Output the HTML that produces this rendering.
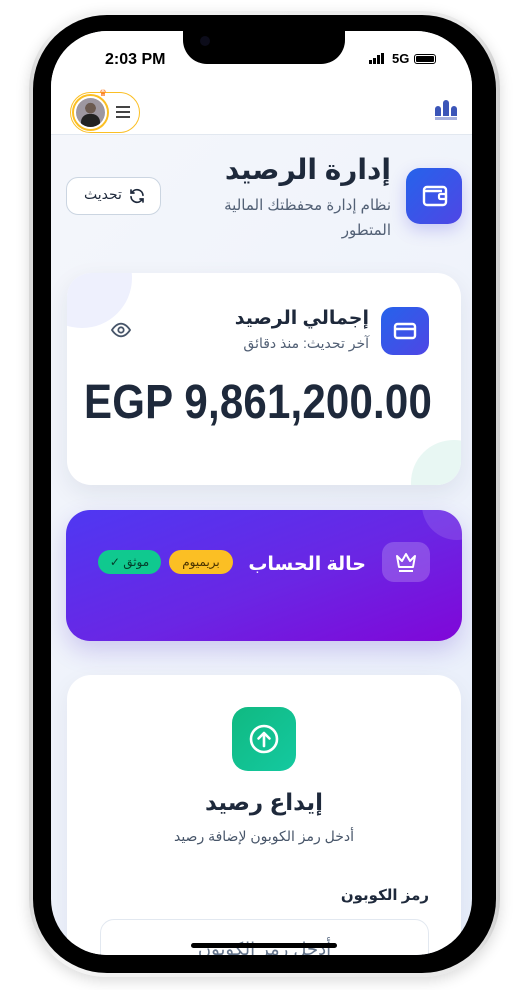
<!DOCTYPE html>
<html><head><meta charset="utf-8">
<style>
*{margin:0;padding:0;box-sizing:border-box}
body{width:522px;height:990px;background:#fff;position:relative;overflow:hidden;font-family:"Liberation Sans","Noto Sans CJK SC",sans-serif}
.abs{position:absolute}
.frame{left:29px;top:11px;width:471px;height:966px;border-radius:78px;background:linear-gradient(90deg,#d7d7d7,#f4f4f4 6%,#e8e8e8 94%,#cfcfcf);box-shadow:0 4px 14px rgba(0,0,0,.15)}
.bezel{left:33px;top:15px;width:463px;height:958px;border-radius:74px;background:#000}
.screen{left:51px;top:31px;width:421px;height:924px;border-radius:56px;overflow:hidden;background:linear-gradient(135deg,#f5f7fb,#eef2fb 60%,#e7eefb)}
.ar{direction:rtl;font-family:"Liberation Sans","DejaVu Sans",sans-serif}
</style></head><body>
<div class="abs frame"></div>
<div class="abs bezel"></div>
<div class="abs screen">
  <div class="abs" style="left:0;top:0;width:421px;height:104px;background:#fff;border-bottom:1px solid #e2e8f0"></div>
  <div class="abs" style="left:132px;top:-2px;width:162px;height:35px;background:#000;border-radius:0 0 24px 24px"></div>
  <div class="abs" style="left:149px;top:5px;width:10px;height:10px;border-radius:50%;background:#0c0c1a"></div>
  <div class="abs" style="left:54px;top:20px;font-weight:bold;font-size:16px;color:#000">2:03 PM</div>
  <div class="abs" style="left:318px;top:22px;width:18px;height:12px">
    <div class="abs" style="left:0;top:7px;width:3px;height:4px;background:#000"></div>
    <div class="abs" style="left:4px;top:5px;width:3px;height:6px;background:#000"></div>
    <div class="abs" style="left:8px;top:2px;width:3px;height:9px;background:#000"></div>
    <div class="abs" style="left:12px;top:0;width:3px;height:11px;background:#000"></div>
  </div>
  <div class="abs" style="left:341px;top:20px;font-weight:bold;font-size:13px;color:#000">5G</div>
  <div class="abs" style="left:363px;top:23px;width:22px;height:10px;border:1.5px solid #000;border-radius:3px;padding:1px"><div style="width:100%;height:100%;background:#000;border-radius:1px"></div></div>
  <!-- header pill -->
  <div class="abs" style="left:19px;top:61px;width:70px;height:41px;border:1.5px solid #fbbf24;border-radius:21px;background:#fff"></div>
  <div class="abs" style="left:21px;top:63px;width:37px;height:37px;border:2px solid #fbbf24;border-radius:50%;padding:2px"><div style="width:100%;height:100%;border-radius:50%;background:radial-gradient(circle at 50% 35%,#6b5a50 0 22%,#9d97a0 23%);overflow:hidden;position:relative"><div style="position:absolute;left:5px;top:16px;width:19px;height:14px;background:#222;border-radius:8px 8px 0 0"></div></div></div>
  <div class="abs" style="left:48px;top:57px;font-size:9px;color:#f97316">♛</div>
  <div class="abs" style="left:65px;top:75px;width:14px;height:2px;background:#444;box-shadow:0 5px 0 #444,0 10px 0 #444"></div>
  <!-- logo -->
  <div class="abs" style="left:384px;top:69px;width:22px;height:16px">
    <div class="abs" style="left:0;top:6px;width:6px;height:10px;background:#3b55b8;border-radius:3px 3px 0 0"></div>
    <div class="abs" style="left:8px;top:0;width:6px;height:16px;background:#3b55b8;border-radius:3px 3px 0 0"></div>
    <div class="abs" style="left:16px;top:6px;width:6px;height:10px;background:#3b55b8;border-radius:3px 3px 0 0"></div>
  </div>
  <div class="abs" style="left:384px;top:86px;width:22px;height:3px;background:#6b7cc8;opacity:.6"></div>

  <!-- page title -->
  <div class="abs" style="left:355px;top:137px;width:56px;height:56px;border-radius:14px;background:linear-gradient(135deg,#2563eb,#4f46e5);box-shadow:0 6px 16px rgba(79,70,229,.25)">
    <svg width="56" height="56" viewBox="0 0 56 56"><rect x="18" y="19" width="22" height="18" rx="3" fill="none" stroke="#fff" stroke-width="2.4"/><path d="M18 23h18" stroke="#fff" stroke-width="2.4" fill="none"/><rect x="33" y="26" width="7" height="5" rx="1.5" fill="none" stroke="#fff" stroke-width="2.2"/></svg>
  </div>
  <div class="abs ar" style="right:81px;top:122px;font-size:28px;font-weight:bold;color:#1e293b">إدارة الرصيد</div>
  <div class="abs ar" style="right:81px;top:162px;width:200px;font-size:15px;line-height:25px;color:#526075;text-align:right">نظام إدارة محفظتك المالية المتطور</div>
  <div class="abs" style="left:15px;top:146px;width:95px;height:38px;border:1px solid #cbd5e1;border-radius:12px;background:#fff"></div>
  <div class="abs ar" style="left:33px;top:155px;font-size:14px;color:#1e293b">تحديث</div>
  <svg class="abs" style="left:77px;top:156px" width="18" height="18" viewBox="0 0 24 24" fill="none" stroke="#1e293b" stroke-width="2.2" stroke-linecap="round"><path d="M20 11a8 8 0 0 0-14.5-4M4 4v4h4M4 13a8 8 0 0 0 14.5 4M20 20v-4h-4"/></svg>

  <!-- balance card -->
  <div class="abs" style="left:16px;top:242px;width:394px;height:212px;border-radius:24px;background:#fff;box-shadow:0 8px 24px rgba(30,41,59,.08);overflow:hidden">
    <div class="abs" style="left:-35px;top:-45px;width:100px;height:100px;border-radius:50%;background:#eef0fd"></div>
    <div class="abs" style="right:-35px;bottom:-40px;width:85px;height:85px;border-radius:50%;background:#e8f7f3"></div>
    <div class="abs" style="left:314px;top:34px;width:48px;height:48px;border-radius:12px;background:linear-gradient(135deg,#2563eb,#4f46e5)">
      <svg width="48" height="48" viewBox="0 0 48 48" fill="none" stroke="#fff" stroke-width="2.4"><rect x="14" y="17" width="20" height="14" rx="2.5"/><path d="M14 22h20"/></svg>
    </div>
    <div class="abs ar" style="right:92px;top:34px;font-size:19px;font-weight:bold;color:#1e293b">إجمالي الرصيد</div>
    <div class="abs ar" style="right:92px;top:62px;font-size:14px;color:#526075">آخر تحديث: منذ دقائق</div>
    <svg class="abs" style="left:43px;top:48px" width="22" height="18" viewBox="0 0 24 20" fill="none" stroke="#475569" stroke-width="2"><path d="M2 10s4-7 10-7 10 7 10 7-4 7-10 7S2 10 2 10z"/><circle cx="12" cy="10" r="3"/></svg>
    <div class="abs" style="left:17px;top:105px;white-space:nowrap;font-size:42px;font-weight:bold;color:#1e293b;transform:scaleY(1.15);transform-origin:left center;letter-spacing:.2px">EGP 9,861,200.00</div>
  </div>

  <!-- status card -->
  <div class="abs" style="left:15px;top:479px;width:396px;height:131px;border-radius:24px;background:linear-gradient(160deg,#4f38f2,#6a26e4 55%,#8007d8);box-shadow:0 10px 24px rgba(80,50,200,.22);overflow:hidden">
    <div class="abs" style="right:-30px;top:-40px;width:70px;height:70px;border-radius:50%;background:rgba(255,255,255,.12)"></div>
    <div class="abs" style="left:316px;top:32px;width:48px;height:40px;border-radius:12px;background:rgba(255,255,255,.2)">
      <svg width="48" height="40" viewBox="0 0 48 40" fill="none" stroke="#fff" stroke-width="2" stroke-linejoin="round"><path d="M15 14l5 5 4-7 4 7 5-5-2 11H17z"/><path d="M17 29h14"/></svg>
    </div>
    <div class="abs ar" style="right:96px;top:43px;font-size:19px;font-weight:bold;color:#fff">حالة الحساب</div>
    <div class="abs ar" style="left:103px;top:40px;width:64px;height:24px;border-radius:12px;background:#fbbf24;color:#4a3300;font-size:12px;text-align:center;line-height:24px">بريميوم</div>
    <div class="abs ar" style="left:32px;top:40px;width:63px;height:24px;border-radius:12px;background:#10c98f;color:#053d2b;font-size:12px;text-align:center;line-height:24px">موثق ✓</div>
  </div>

  <!-- deposit card -->
  <div class="abs" style="left:16px;top:644px;width:394px;height:320px;border-radius:24px;background:#fff;box-shadow:0 8px 24px rgba(30,41,59,.06)">
    <div class="abs" style="left:165px;top:32px;width:64px;height:64px;border-radius:16px;background:linear-gradient(135deg,#10b981,#14c9a0)">
      <svg width="64" height="64" viewBox="0 0 64 64" fill="none" stroke="#fff" stroke-width="2.6" stroke-linecap="round" stroke-linejoin="round"><circle cx="32" cy="32" r="13"/><path d="M32 39V26M26.5 31.5L32 26l5.5 5.5"/></svg>
    </div>
    <div class="abs ar" style="left:0;width:394px;top:114px;text-align:center;font-size:23px;font-weight:bold;color:#1e293b">إيداع رصيد</div>
    <div class="abs ar" style="left:0;width:394px;top:153px;text-align:center;font-size:14px;color:#475569">أدخل رمز الكوبون لإضافة رصيد</div>
    <div class="abs ar" style="right:32px;top:211px;font-size:15px;font-weight:bold;color:#1e293b">رمز الكوبون</div>
    <div class="abs" style="left:33px;top:244px;width:329px;height:80px;border:1.5px solid #e2e8f0;border-radius:14px"></div>
    <div class="abs ar" style="left:33px;width:329px;top:264px;text-align:center;font-size:18px;color:#64748b">أدخل رمز الكوبون</div>
  </div>
  <div class="abs" style="left:140px;top:912px;width:146px;height:5px;border-radius:3px;background:#000"></div>
</div>
</body></html>
